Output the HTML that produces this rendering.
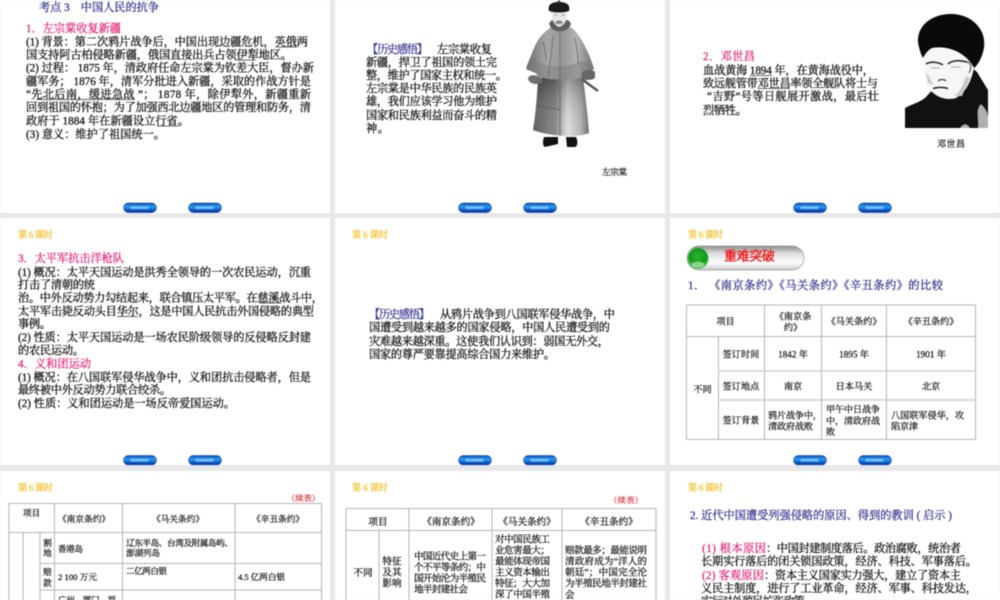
<!DOCTYPE html>
<html lang="zh"><head><meta charset="utf-8"><title>中国人民的抗争</title>
<style>
html,body{margin:0;padding:0;width:1000px;height:600px;overflow:hidden;background:#e8e8e8}
svg{display:block;filter:blur(.45px)}
text{font-family:"Liberation Serif","Noto Serif CJK SC",serif;font-size:11.2px;fill:#111;stroke:#111;stroke-width:.28px}
.p{fill:#e2287c;stroke:#e2287c}
.b{fill:#34348f;stroke:#34348f}
.y{font-size:9.4px;fill:#f4c63c;stroke:#f4c63c;stroke-width:.35px}
.t{font-size:9.2px;stroke-width:.22px}
.s{font-size:8.7px;stroke-width:.22px}
.r{font-size:8.2px;fill:#d8323c;stroke:#d8323c;stroke-width:.2px}
.m{font-size:9.6px;stroke-width:.24px}
.u{stroke:#333;stroke-width:.7}
.l{stroke:#b4b4b4;stroke-width:1;fill:none}
.c{text-anchor:middle}
</style></head><body>
<svg width="1000" height="600" viewBox="0 0 1000 600" xmlns="http://www.w3.org/2000/svg">
<defs>
<linearGradient id="btn" x1="0" y1="0" x2="0" y2="1"><stop offset="0" stop-color="#0b4fc0"/><stop offset=".4" stop-color="#2a9cf0"/><stop offset=".75" stop-color="#0a58c8"/><stop offset="1" stop-color="#062f96"/></linearGradient>
<linearGradient id="pill" x1="0" y1="0" x2="0" y2="1"><stop offset="0" stop-color="#8a8a8a"/><stop offset=".3" stop-color="#dddddd"/><stop offset=".7" stop-color="#ffffff"/><stop offset="1" stop-color="#c8c8c8"/></linearGradient>
<radialGradient id="gr" cx=".5" cy=".4" r=".65"><stop offset="0" stop-color="#2fb52f"/><stop offset=".6" stop-color="#0f9a1a"/><stop offset="1" stop-color="#7fd27f"/></radialGradient>
<linearGradient id="robe" x1="0" y1="0" x2="1" y2="0"><stop offset="0" stop-color="#555"/><stop offset=".4" stop-color="#828282"/><stop offset=".62" stop-color="#e0e0e0"/><stop offset=".85" stop-color="#b0b0b0"/><stop offset="1" stop-color="#666"/></linearGradient>
<linearGradient id="robeV" x1="0" y1="0" x2="0" y2="1"><stop offset="0" stop-color="#000" stop-opacity=".35"/><stop offset="1" stop-color="#fff" stop-opacity=".05"/></linearGradient>
<linearGradient id="jacket" x1="0" y1="0" x2="1" y2="0"><stop offset="0" stop-color="#6a6a6a"/><stop offset=".3" stop-color="#a6a6a6"/><stop offset=".55" stop-color="#989898"/><stop offset=".75" stop-color="#b4b4b4"/><stop offset="1" stop-color="#707070"/></linearGradient>
<g id="btns"><rect x="0" y="0" width="33" height="9.5" rx="4.7" fill="url(#btn)" stroke="#0a2f8f" stroke-width=".5"/><rect x="7" y="3.3" width="18" height="2.8" fill="#8fd0f8" opacity=".75"/><rect x="65" y="0" width="33" height="9.5" rx="4.7" fill="url(#btn)" stroke="#0a2f8f" stroke-width=".5"/><rect x="72" y="3.3" width="18" height="2.8" fill="#8fd0f8" opacity=".75"/></g>
</defs>

<!-- slide backgrounds -->
<rect x="0" y="0" width="330" height="213" fill="#fff"/><rect x="335" y="0" width="330" height="213" fill="#fff"/><rect x="670" y="0" width="330" height="213" fill="#fff"/>
<rect x="0" y="218" width="330" height="247" fill="#fff"/><rect x="335" y="218" width="330" height="247" fill="#fff"/><rect x="670" y="218" width="330" height="247" fill="#fff"/>
<rect x="0" y="471" width="330" height="129" fill="#fff"/><rect x="335" y="471" width="330" height="129" fill="#fff"/><rect x="670" y="471" width="330" height="129" fill="#fff"/>

<!-- buttons -->
<use href="#btns" x="123.5" y="203"/><use href="#btns" x="458.5" y="203"/><use href="#btns" x="793.5" y="203"/>
<use href="#btns" x="123.5" y="455.5"/><use href="#btns" x="458.5" y="455.5"/><use href="#btns" x="793.5" y="455.5"/>
<g fill="#dde4f2"><rect x="126" y="465" width="28" height="2"/><rect x="191" y="465" width="28" height="2"/><rect x="461" y="465" width="28" height="2"/><rect x="526" y="465" width="28" height="2"/><rect x="796" y="465" width="28" height="2"/><rect x="861" y="465" width="28" height="2"/></g>

<!-- slide 1 -->
<text class="b" x="39" y="11" textLength="120">考点 3　中国人民的抗争</text>
<text class="p" x="26" y="32" textLength="95">1．左宗棠收复新疆</text>
<text x="26" y="45.5" textLength="282">(1) 背景：第二次鸦片战争后，中国出现边疆危机，英俄两</text>
<text x="26" y="58.5" textLength="266">国支持阿古柏侵略新疆，俄国直接出兵占领伊犁地区。</text>
<text x="26" y="71.5" textLength="288">(2) 过程： 1875 年，清政府任命左宗棠为钦差大臣，督办新</text>
<text x="26" y="85" textLength="285">疆军务； 1876 年，清军分批进入新疆，采取的作战方针是</text>
<text x="26" y="98" textLength="285">“先北后南，缓进急战 ”； 1878 年，除伊犁外，新疆重新</text>
<text x="26" y="111" textLength="285">回到祖国的怀抱；为了加强西北边疆地区的管理和防务，清</text>
<text x="26" y="124.5" textLength="163">政府于 1884 年在新疆设立行省。</text>
<text x="26" y="138" textLength="139">(3) 意义：维护了祖国统一。</text>
<g class="u"><path d="M276 47H297M235 60H256M36 99.5H135M157 126H178"/></g>

<!-- slide 2 -->
<text class="b" x="367" y="53" textLength="61">【历史感悟】</text>
<text x="437" y="53" textLength="55">左宗棠收复</text>
<text x="366" y="66" textLength="131">新疆，捍卫了祖国的领土完</text>
<text x="366" y="79" textLength="141">整，维护了国家主权和统一。</text>
<text x="366" y="92" textLength="131">左宗棠是中华民族的民族英</text>
<text x="366" y="105" textLength="131">雄，我们应该学习他为维护</text>
<text x="366" y="119" textLength="131">国家和民族利益而奋斗的精</text>
<text x="366" y="132" textLength="23">神。</text>
<text class="s" x="602" y="175" textLength="25">左宗棠</text>
<!-- figure -->
<g>
<path d="M544 137L558 137 558 144 545 147C542 146 543 140 544 137ZM566 137L576 137C578 141 578 146 575 147L567 147Z" fill="#111"/>
<path d="M538 78C537 100 535 118 533 130C545 135 575 139 589 133C588 115 585 95 583 76Z" fill="url(#robe)"/>
<path d="M538 78C537 100 535 118 533 130C545 135 575 139 589 133C588 115 585 95 583 76Z" fill="url(#robeV)"/>
<path d="M537 105C543 108 552 107 560 110M560 84L560 136" stroke="#555" stroke-width=".7" fill="none"/>
<path d="M555 25C545 30 538 38 534 48C531 56 528 62 526 69C532 72 536 72 538 76C545 80 570 81 581 78C584 73 590 72 594 69C591 58 585 45 579 36C575 30 570 26 566 25C563 29 558 29 555 25Z" fill="url(#jacket)"/>
<path d="M526 69C532 72 536 72 538 76C545 80 570 81 581 78C584 73 590 72 594 69C590 62 585 60 578 62C560 70 540 66 533 58Z" fill="#7a7a7a" opacity=".45"/>
<path d="M553 36C552 50 550 65 548 77M560 32L560 80M575 38C577 48 578 58 578 64M543 42C545 48 546 54 546 60" stroke="#5e5e5e" stroke-width=".7" fill="none"/>
<path d="M528 79C528 75 534 74 540 77L543 82C538 85 530 85 528 79Z" fill="#6e6e6e"/>
<path d="M582 72C586 69 592 69 595 72L595 78C591 81 585 80 582 79Z" fill="#666"/>
<path d="M583 80L598 91" stroke="#555" stroke-width="2.4"/>
<path d="M550 26C553 33 566 33 570 26L571 23 568 20 552 20 549 23Z" fill="#5e5e5e"/>
<path d="M552 11L567 11C568 17 566 25 559 27 553 25 551 17 552 11Z" fill="#e8e8e8"/>
<path d="M555 22.5C557 25 561 25 563 22.5L561 20.5 557 20.5Z" fill="#8a8a8a"/>
<path d="M554.5 15H557M561.5 15H564.5" stroke="#777" stroke-width=".8"/>
<path d="M549 11C547 4 553 2 559 2 565 2 571 4 569 11C564 13 554 13 549 11Z" fill="#1a1a1a"/>
<circle cx="559" cy="2" r="1.5" fill="#333"/>
</g>

<!-- slide 3 -->
<text class="p" x="703" y="60" textLength="52">2．邓世昌</text>
<text x="703" y="74" textLength="171">血战黄海 1894 年，在黄海战役中，</text>
<text x="703" y="87" textLength="175">致远舰管带邓世昌率领全舰队将士与</text>
<text x="707" y="100" textLength="172">“吉野”号等日舰展开激战，最后壮</text>
<text x="703" y="114" textLength="44">烈牺牲。</text>
<text class="t" x="937" y="147" textLength="28">邓世昌</text>
<g class="u"><path d="M750 75.5H772M758 88.5H790"/></g>
<!-- portrait -->
<g>
<path d="M905 128L905 108C912 104 921 102 926 97L934 88 970 66 977 72 988 90 988 128Z" fill="#111"/>
<path d="M978 128C979 118 975 110 981 104 985 108 988 112 988 118L988 128ZM960 128C963 124 966 122 970 128Z" fill="#b0b0b0"/>
<path d="M925 52C923 64 923 80 929 89 936 97 946 101 956 98 967 92 972 78 974 68 968 54 950 44 925 52Z" fill="#f6f6f6"/>
<path d="M926 72C929 76 931 81 933 85L928 83ZM966 76C964 84 960 92 954 96L962 96 970 78Z" fill="#c8c8c8"/>
<path d="M919 47C914 28 930 14 951 14 972 14 987 30 984 48 982 58 978 65 974 68 967 54 950 45 932 48 928 50 925 54 923 58 921 55 920 51 919 47Z" fill="#0a0a0a"/>
<path d="M926 64C931 61 938 62 943 65M948 64C952 60 960 60 967 62" stroke="#2a2a2a" stroke-width="1.6" fill="none"/>
<path d="M931 68H940M951 67H961" stroke="#aaa" stroke-width="1"/>
<path d="M938 81C940 79 944 79 946 81" stroke="#444" stroke-width="1.3" fill="none"/>
<path d="M933 88.5C938 87 943 87 948 88.5" stroke="#222" stroke-width="1.5" fill="none"/>
<path d="M967 62C971 62 972 68 969 73" stroke="#555" stroke-width="1.2" fill="none"/>
</g>

<!-- slide 4 -->
<text class="y" x="18" y="238" textLength="35">第 6 课时</text>
<text class="p" x="18" y="262" textLength="106">3．太平军抗击洋枪队</text>
<text x="18" y="276" textLength="293">(1) 概况：太平天国运动是洪秀全领导的一次农民运动，沉重</text>
<text x="18" y="288.5" textLength="77">打击了清朝的统</text>
<text x="18" y="301.5" textLength="305">治。中外反动势力勾结起来，联合镇压太平军。在慈溪战斗中，</text>
<text x="18" y="315" textLength="296">太平军击毙反动头目华尔，这是中国人民抗击外国侵略的典型</text>
<text x="18" y="327.5" textLength="33">事例。</text>
<text x="18" y="341" textLength="293">(2) 性质：太平天国运动是一场农民阶级领导的反侵略反封建</text>
<text x="18" y="354" textLength="66">的农民运动。</text>
<text class="p" x="18" y="367.5" textLength="73">4．义和团运动</text>
<text x="18" y="381" textLength="293">(1) 概况：在八国联军侵华战争中，义和团抗击侵略者，但是</text>
<text x="18" y="393.5" textLength="153">最终被中外反动势力联合绞杀。</text>
<text x="18" y="407" textLength="217">(2) 性质：义和团运动是一场反帝爱国运动。</text>
<g class="u"><path d="M259 303H281M117 316.5H138"/></g>

<!-- slide 5 -->
<text class="y" x="352" y="238" textLength="36">第 6 课时</text>
<text class="b" x="369" y="318" textLength="61">【历史感悟】</text>
<text x="440" y="318" textLength="175">从鸦片战争到八国联军侵华战争，中</text>
<text x="369" y="331" textLength="241">国遭受到越来越多的国家侵略，中国人民遭受到的</text>
<text x="369" y="345" textLength="240">灾难越来越深重。这使我们认识到：弱国无外交，</text>
<text x="369" y="358" textLength="186">国家的尊严要靠提高综合国力来维护。</text>

<!-- slide 6 -->
<text class="y" x="688" y="238" textLength="35">第 6 课时</text>
<rect x="687" y="246" width="117" height="24" rx="12" fill="url(#pill)" stroke="#999" stroke-width=".7"/>
<circle cx="698" cy="258.5" r="10.5" fill="url(#gr)"/>
<ellipse cx="698" cy="264.5" rx="6.5" ry="3" fill="#a6e0a0" opacity=".8"/>
<text x="724" y="260.5" textLength="51" style="font-family:'Liberation Sans','Noto Sans CJK SC',sans-serif;font-size:13px;fill:#f00c10;stroke:#f00c10;stroke-width:.3px">重难突破</text>
<text class="b" x="688" y="289" textLength="255">1． 《南京条约》《马关条约》《辛丑条约》的比较</text>
<g class="l">
<path d="M686.5 305H975.5V439.5H686.5ZM686.5 336.5H975.5M718.5 371H975.5M718.5 400H975.5M718.5 336.5V439.5M764.5 305V439.5M821.5 305V439.5M886.5 305V439.5"/>
</g>
<path d="M718.5 371H975.5M718.5 400H975.5" stroke="#d0d0d0" stroke-width="1.4"/>
<g>
<text class="t c" x="725.5" y="324.5">项目</text>
<text class="t c" x="793" y="319.5">《南京条</text>
<text class="t c" x="793" y="330.5">约》</text>
<text class="t c" x="854" y="324.5">《马关条约》</text>
<text class="t c" x="931" y="324.5">《辛丑条约》</text>
<text class="t c" x="702.5" y="392.5">不同</text>
<text class="t c" x="741" y="357.5">签订时间</text>
<text class="t c" x="793" y="357.5">1842 年</text>
<text class="t c" x="854" y="357.5">1895 年</text>
<text class="t c" x="931" y="357.5">1901 年</text>
<text class="t c" x="741" y="389.5">签订地点</text>
<text class="t c" x="793" y="389.5">南京</text>
<text class="t c" x="854" y="389.5">日本马关</text>
<text class="t c" x="931" y="389.5">北京</text>
<text class="t c" x="741" y="423.5">签订背景</text>
<text class="t" x="768" y="418.5" textLength="54">鸦片战争中，</text>
<text class="t" x="768" y="429.5" textLength="45">清政府战败</text>
<text class="t" x="826" y="412.5" textLength="54">甲午中日战争</text>
<text class="t" x="826" y="424" textLength="54">中，清政府战</text>
<text class="t" x="826" y="435">败</text>
<text class="t" x="891" y="418.5" textLength="73">八国联军侵华，攻</text>
<text class="t" x="891" y="429.5" textLength="27">陷京津</text>
</g>

<!-- slide 7 -->
<text class="y" x="18" y="491" textLength="35">第 6 课时</text>
<text class="r" x="287" y="501" textLength="33">（续表）</text>
<g class="l"><path d="M9 503.5H321.5M9 532.5H321.5M40 563.5H321.5M40 590H321.5M9 503.5V600M23 532.5V600M40 532.5V600M54.5 503.5V600M122.5 503.5V600M235 503.5V600M321.5 503.5V600"/></g>
<text class="s c" x="31.5" y="516">项目</text>
<text class="s c" x="84" y="522">《南京条约》</text>
<text class="s c" x="178" y="522">《马关条约》</text>
<text class="s c" x="278" y="522">《辛丑条约》</text>
<text class="s c" x="47.5" y="546">割</text><text class="s c" x="47.5" y="556">地</text>
<text class="s" x="58" y="552" textLength="25">香港岛</text>
<text class="s" x="126" y="546" textLength="107">辽东半岛、台湾及附属岛屿、</text>
<text class="s" x="126" y="556" textLength="34">澎湖列岛</text>
<text class="s c" x="47.5" y="575">赔</text><text class="s c" x="47.5" y="586">款</text>
<text class="s" x="58" y="580" textLength="39">2 100 万元</text>
<text class="s" x="126" y="574" textLength="41">二亿两白银</text>
<text class="s" x="238" y="580" textLength="47">4.5 亿两白银</text>
<text class="s" x="58" y="603" textLength="58">广州、厦门、福</text>

<!-- slide 8 -->
<text class="y" x="352" y="491" textLength="36">第 6 课时</text>
<text class="r" x="609" y="503" textLength="34">（续表）</text>
<g class="l"><path d="M346 508.5H656M346 530.5H656M346 508.5V600M379 530.5V600M409 508.5V600M492 508.5V600M562 508.5V600M656 508.5V600"/></g>
<g>
<text class="m c" x="378" y="525">项目</text>
<text class="m c" x="451" y="525">《南京条约》</text>
<text class="m c" x="527" y="525">《马关条约》</text>
<text class="m c" x="609" y="525">《辛丑条约》</text>
<text class="m c" x="363" y="576">不同</text>
<text class="m c" x="392" y="564.5">特征</text>
<text class="m c" x="392" y="575.5">及其</text>
<text class="m c" x="392" y="586.5">影响</text>
<text class="m" x="414" y="559.5" textLength="72">中国近代史上第一</text>
<text class="m" x="414" y="570.5" textLength="72">个不平等条约；中</text>
<text class="m" x="414" y="581.5" textLength="72">国开始沦为半殖民</text>
<text class="m" x="414" y="592.5" textLength="54">地半封建社会</text>
<text class="m" x="495" y="542.5" textLength="55">对中国民族工</text>
<text class="m" x="495" y="553.5" textLength="55">业危害最大；</text>
<text class="m" x="495" y="564.5" textLength="55">最能体现帝国</text>
<text class="m" x="495" y="575.5" textLength="55">主义资本输出</text>
<text class="m" x="495" y="586.5" textLength="55">特征；大大加</text>
<text class="m" x="495" y="597.5" textLength="55">深了中国半殖</text>
<text class="m" x="565" y="553.5" textLength="82">赔款最多；最能说明</text>
<text class="m" x="565" y="564.5" textLength="82">清政府成为“洋人的</text>
<text class="m" x="565" y="575.5" textLength="82">朝廷”；中国完全沦</text>
<text class="m" x="565" y="586.5" textLength="82">为半殖民地半封建社</text>
<text class="m" x="565" y="598">会</text>
</g>

<!-- slide 9 -->
<text class="y" x="688" y="491" textLength="35">第 6 课时</text>
<text class="b" x="690" y="519" textLength="262">2. 近代中国遭受列强侵略的原因、得到的教训 ( 启示 )</text>
<text class="p" x="702" y="552" textLength="64">(1) 根本原因</text>
<text x="766" y="552" textLength="195">：中国封建制度落后。政治腐败，统治者</text>
<text x="701" y="565" textLength="276">长期实行落后的闭关锁国政策，经济、科技、军事落后。</text>
<text class="p" x="702" y="579" textLength="62">(2) 客观原因</text>
<text x="764" y="579" textLength="197">：资本主义国家实力强大，建立了资本主</text>
<text x="701" y="592" textLength="276">义民主制度，进行了工业革命，经济、军事、科技发达，</text>
<text x="701" y="605" textLength="114">实行对外殖民扩张政策。</text>
</svg>
</body></html>
